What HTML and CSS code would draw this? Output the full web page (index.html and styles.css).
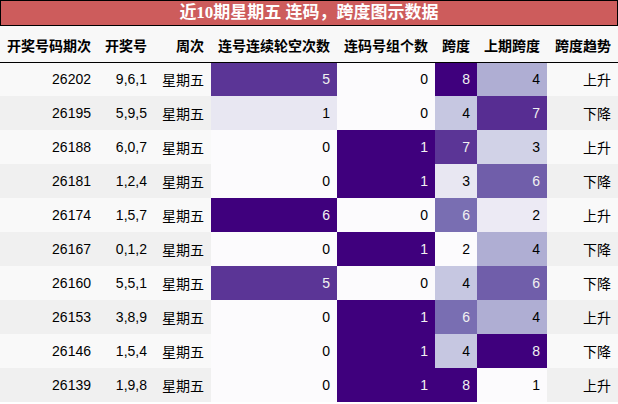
FILE: index.html
```html
<!DOCTYPE html>
<html lang="zh">
<head>
<meta charset="utf-8">
<link rel="stylesheet" href="styles.css">
</head>
<body>
<div class="title">近10期星期五 连码，跨度图示数据</div>
<table class="data">
  <colgroup>
    <col class="c0"><col class="c1"><col class="c2"><col class="c3"><col class="c4"><col class="c5"><col class="c6"><col class="c7">
  </colgroup>
  <thead>
    <tr><th>开奖号码期次</th><th>开奖号</th><th>周次</th><th>连号连续轮空次数</th><th>连码号组个数</th><th>跨度</th><th>上期跨度</th><th>跨度趋势</th></tr>
  </thead>
  <tbody>
    <tr><td>26202</td><td>9,6,1</td><td>星期五</td><td class="g833 w">5</td><td class="g0">0</td><td class="g1000 w">8</td><td class="g429">4</td><td>上升</td></tr>
    <tr><td>26195</td><td>5,9,5</td><td>星期五</td><td class="g167">1</td><td class="g0">0</td><td class="g333">4</td><td class="g857 w">7</td><td>下降</td></tr>
    <tr><td>26188</td><td>6,0,7</td><td>星期五</td><td class="g0">0</td><td class="g1000 w">1</td><td class="g833 w">7</td><td class="g286">3</td><td>上升</td></tr>
    <tr><td>26181</td><td>1,2,4</td><td>星期五</td><td class="g0">0</td><td class="g1000 w">1</td><td class="g167">3</td><td class="g714 w">6</td><td>下降</td></tr>
    <tr><td>26174</td><td>1,5,7</td><td>星期五</td><td class="g1000 w">6</td><td class="g0">0</td><td class="g667 w">6</td><td class="g143">2</td><td>上升</td></tr>
    <tr><td>26167</td><td>0,1,2</td><td>星期五</td><td class="g0">0</td><td class="g1000 w">1</td><td class="g0">2</td><td class="g429">4</td><td>下降</td></tr>
    <tr><td>26160</td><td>5,5,1</td><td>星期五</td><td class="g833 w">5</td><td class="g0">0</td><td class="g333">4</td><td class="g714 w">6</td><td>下降</td></tr>
    <tr><td>26153</td><td>3,8,9</td><td>星期五</td><td class="g0">0</td><td class="g1000 w">1</td><td class="g667 w">6</td><td class="g429">4</td><td>上升</td></tr>
    <tr><td>26146</td><td>1,5,4</td><td>星期五</td><td class="g0">0</td><td class="g1000 w">1</td><td class="g333">4</td><td class="g1000 w">8</td><td>下降</td></tr>
    <tr><td>26139</td><td>1,9,8</td><td>星期五</td><td class="g0">0</td><td class="g1000 w">1</td><td class="g1000 w">8</td><td class="g0">1</td><td>上升</td></tr>
  </tbody>
</table>
</body>
</html>
```
FILE: styles.css
```css
html, body {
  margin: 0;
  padding: 0;
  background: #ffffff;
}
body {
  width: 618px;
  font-family: "Liberation Sans", "Noto Sans CJK SC", sans-serif;
  font-size: 14px;
  color: #000;
}
.title {
  box-sizing: border-box;
  height: 26px;
  border: 1px solid #000;
  background: #cd5c5c;
  color: #ffffff;
  font-family: "Liberation Serif", "Noto Sans CJK SC", serif;
  font-weight: bold;
  font-size: 17px;
  line-height: 24px;
  text-align: center;
}
.data {
  width: 618px;
  border-collapse: collapse;
  border-spacing: 0;
  table-layout: fixed;
}
.c0 { width: 98px; }
.c1 { width: 56px; }
.c2 { width: 57px; }
.c3 { width: 126px; }
.c4 { width: 98px; }
.c5 { width: 42px; }
.c6 { width: 70px; }
.c7 { width: 71px; }
.data th {
  height: 36px;
  padding: 2px 7px 0 0;
  box-sizing: border-box;
  text-align: right;
  font-weight: bold;
  background: #f8f8f8;
  border-bottom: 1px solid #000;
  white-space: nowrap;
}
.data td {
  height: 34px;
  padding: 0 7px 0 0;
  box-sizing: border-box;
  text-align: right;
  white-space: nowrap;
}
.data tbody tr:nth-child(odd) td { background: #f9f9f9; }
.data tbody tr:nth-child(even) td { background: #f0f0f0; }
.data tbody tr td.g0 { background: #fcfbfd; }
.data tbody tr td.g143 { background: #eceaf4; }
.data tbody tr td.g167 { background: #e8e7f2; }
.data tbody tr td.g286 { background: #d1d2e7; }
.data tbody tr td.g333 { background: #c6c7e1; }
.data tbody tr td.g429 { background: #afaed3; }
.data tbody tr td.g667 { background: #796eb2; }
.data tbody tr td.g714 { background: #705eaa; }
.data tbody tr td.g833 { background: #5b3596; }
.data tbody tr td.g857 { background: #572d92; }
.data tbody tr td.g1000 { background: #3f007d; }
.data td.w { color: #f1f1f1; }
```
